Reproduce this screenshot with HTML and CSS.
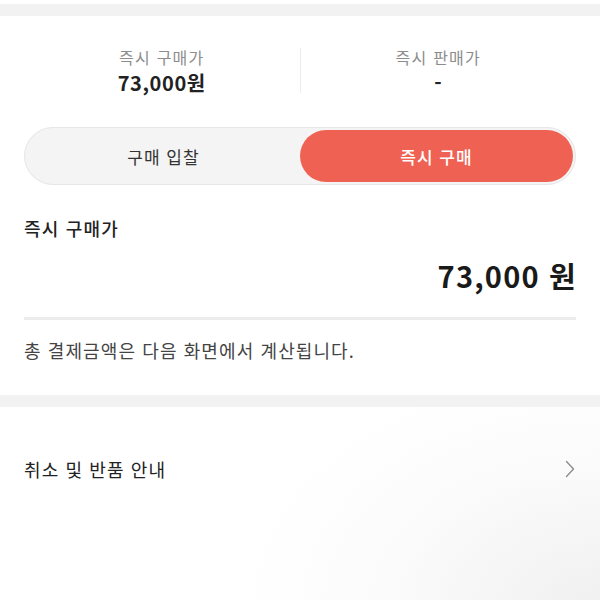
FILE: index.html
```html
<!DOCTYPE html>
<html lang="ko">
<head>
<meta charset="utf-8">
<link rel="stylesheet" href="styles.css">
</head>
<body>
<div class="page">
  <div class="top-gap"></div>
  <div class="band"></div>
  <section class="card">
    <div class="stats">
      <div class="stat">
        <div class="stat-label">즉시 구매가</div>
        <div class="stat-value">73,000원</div>
      </div>
      <div class="stat-divider"></div>
      <div class="stat">
        <div class="stat-label">즉시 판매가</div>
        <div class="stat-value">-</div>
      </div>
    </div>
    <div class="toggle">
      <div class="tab">구매 입찰</div>
      <div class="tab active">즉시 구매</div>
    </div>
    <div class="heading">즉시 구매가</div>
    <div class="price">73,000 원</div>
    <div class="rule"></div>
    <div class="note">총 결제금액은 다음 화면에서 계산됩니다.</div>
  </section>
  <div class="band"></div>
  <section class="list">
    <div class="row">
      <span class="row-text">취소 및 반품 안내</span>
      <svg class="chev" width="12" height="20" viewBox="0 0 12 20"><path d="M2.5 2.5 L9.5 10 L2.5 17.5" fill="none" stroke="#8a8a8a" stroke-width="1.3" stroke-linecap="round" stroke-linejoin="round"/></svg>
    </div>
  </section>
</div>
</body>
</html>
```
FILE: styles.css
```css
* { box-sizing: border-box; }
html, body { margin: 0; padding: 0; background: #fff; }
body {
  font-family: "Noto Sans CJK KR", "Noto Sans", sans-serif;
  color: #222;
  width: 600px;
  height: 600px;
  overflow: hidden;
}
.top-gap { height: 4px; background: #fff; }
.band { height: 12px; background: #f2f2f2; }
.card { padding: 0 24px; }
.stats {
  display: flex;
  align-items: flex-start;
  padding-top: 30px;
}
.stat {
  flex: 1;
  display: flex;
  flex-direction: column;
  align-items: center;
}
.stat-label {
  font-size: 16px;
  color: #8c8c8c;
  line-height: 22px;
  letter-spacing: 1.2px;
}
.stat-value {
  font-size: 20px;
  font-weight: 600;
  color: #222;
  line-height: 26px;
  margin-top: 2px;
  letter-spacing: 0.6px;
}
.stat-divider {
  width: 1px;
  height: 45px;
  background: #ececec;
  margin-top: 2px;
}
.toggle {
  display: flex;
  height: 58px;
  border-radius: 29px;
  background: #f4f4f4;
  border: 1px solid #e6e6e6;
  padding: 2px;
  margin-top: 31px;
}
.tab {
  flex: 1;
  display: flex;
  align-items: center;
  justify-content: center;
  font-size: 17px;
  color: #333;
  border-radius: 27px;
  letter-spacing: 1px;
}
.tab.active {
  background: #ef6253;
  color: #fff;
  font-weight: 500;
}
.heading {
  font-size: 18px;
  font-weight: 500;
  color: #222;
  margin-top: 31px;
  line-height: 24px;
  letter-spacing: 1.2px;
}
.price {
  text-align: right;
  font-size: 29px;
  font-weight: 700;
  color: #1a1a1a;
  margin-top: 18px;
  line-height: 34px;
  letter-spacing: 1.2px;
  margin-right: -1px;
}
.rule {
  height: 3px;
  background: #ececec;
  margin-top: 25px;
}
.note {
  font-size: 18px;
  color: #444;
  line-height: 24px;
  margin-top: 18px;
  padding-bottom: 33px;
  letter-spacing: 1.1px;
}
.list {
  padding: 0 24px;
  height: 200px;
  background: radial-gradient(ellipse 360px 240px at 100% 100%, #f0f0f0 0%, #fbfbfb 60%, #fff 100%);
}
.row {
  display: flex;
  align-items: center;
  justify-content: space-between;
  height: 124px;
}
.row-text { font-size: 18px; color: #222; letter-spacing: 1.1px; }
```
